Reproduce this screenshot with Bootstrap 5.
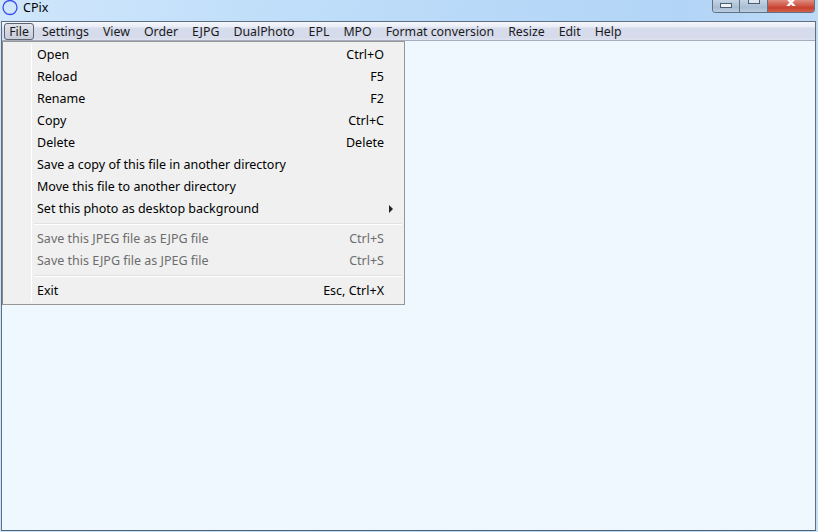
<!DOCTYPE html>
<html lang="en">
<head>
<meta charset="utf-8">
<title>CPix</title>
<link rel="stylesheet" href="https://cdn.jsdelivr.net/npm/bootstrap@5.3.0/dist/css/bootstrap.min.css">
<style>
html,body{height:100%;margin:0}
body{background:#b4d6f7;font-family:"Noto Sans","DejaVu Sans",sans-serif;font-size:12.5px;color:#000;overflow:hidden}
.win-frame{width:818px;height:532px;background:linear-gradient(100deg,#cfe6fb 0%,#bcdcf9 40%,#b2d4f6 75%,#c4dff8 100%);display:flex;flex-direction:column}
.title-row{height:21px;flex:none;padding-left:2px;line-height:16px}
.app-ring{width:16px;height:16px;flex:none}
.app-name{margin-left:5px;font-size:12.5px;line-height:15px}
.win-btns{margin-right:3px;height:13px;border:1px solid #5f7183;border-top:0;border-radius:0 0 4px 4px;overflow:hidden}
.win-btn{width:27px;height:12px;background:linear-gradient(#c5d5e6,#a9bdd3 60%,#bccde0);border-right:1px solid #5f7183;display:flex;justify-content:center}
.win-btn.wb-mid{width:28px}
.win-btn.wb-close{width:46px;border-right:0;background:linear-gradient(#e08d80,#c8412f 65%,#d4614f)}
.glyph-min{width:12px;height:5px;margin-top:3px;background:#eef3f8;border:1px solid #4b5c6e}
.glyph-max{width:12px;height:5px;margin-top:-1px;background:#dfe8f1;border:1px solid #4b5c6e;border-top:0}
.glyph-x{width:14px;height:6px;display:block}
.client-box{flex:1;margin:0 2px 1px 1px;border:1px solid #5d6f80;border-bottom-color:#4f6275;background:#f0f8ff;display:flex;flex-direction:column;position:relative;min-height:0}
.bar-row{height:19px;flex:none;background:linear-gradient(#f5f7fb 0,#e9ecf6 28%,#d7dcec 33%,#d5dbeb 85%,#dfe3ef 100%);border-bottom:1px solid #a7adbd;padding-left:2px;gap:0;font-size:12.33px}
.bar-item{padding:0 7px;line-height:19px;color:#1a1a1a;white-space:nowrap}
.bar-item.open-item{padding:0;width:30px;text-align:center;margin-right:1px;height:17px;line-height:15px;margin-top:1px;border:1px solid #5c6470;border-radius:3px;background:linear-gradient(#dfe3ec,#c7ccd9)}
.drop-panel{position:absolute;left:0;top:19px;width:403px;height:264px;background:#f0f0f0;border:1px solid #979797;padding:2px;border-left-color:#8a8a8a}
.drop-panel::before{content:"";position:absolute;left:28px;top:2px;bottom:2px;width:1px;background:#e2e3e3;border-right:1px solid #fff}
.drop-row{height:22px;line-height:21px;padding:0 18px 0 32px;white-space:nowrap;position:relative}
.drop-row.muted-row{color:#6d6d6d}
.drop-row .keys{color:inherit}
.drop-rule{height:8px;margin-left:29px;position:relative}
.drop-rule::after{content:"";position:absolute;left:0;right:0;top:3px;height:2px;background:#e2e3e3;border-bottom:1px solid #fff}
.sub-arrow{width:0;height:0;border-left:4px solid #222;border-top:4px solid transparent;border-bottom:4px solid transparent;margin-right:-9px;margin-top:7px}
</style>
</head>
<body>
<div class="win-frame">
  <div class="title-row d-flex align-items-start">
    <svg class="app-ring" viewBox="0 0 16 16" aria-hidden="true"><circle cx="8" cy="7.5" r="7" fill="none" stroke="#3c4cf0" stroke-width="1.3"/></svg>
    <span class="app-name">CPix</span>
    <div class="win-btns d-flex ms-auto">
      <div class="win-btn"><div class="glyph-min"></div></div>
      <div class="win-btn wb-mid"><div class="glyph-max"></div></div>
      <div class="win-btn wb-close"><svg class="glyph-x" viewBox="0 0 14 6" aria-hidden="true"><path d="M3 -2 L7 2.5 L11 -2 M3 7 L7 2.5 L11 7" fill="none" stroke="#fff" stroke-width="2.4"/></svg></div>
    </div>
  </div>
  <div class="client-box">
    <nav class="bar-row d-flex">
      <span class="bar-item open-item">File</span>
      <span class="bar-item">Settings</span>
      <span class="bar-item">View</span>
      <span class="bar-item">Order</span>
      <span class="bar-item">EJPG</span>
      <span class="bar-item">DualPhoto</span>
      <span class="bar-item">EPL</span>
      <span class="bar-item">MPO</span>
      <span class="bar-item">Format conversion</span>
      <span class="bar-item">Resize</span>
      <span class="bar-item">Edit</span>
      <span class="bar-item">Help</span>
    </nav>
    <div class="drop-panel">
      <div class="drop-row d-flex justify-content-between"><span>Open</span><span class="keys">Ctrl+O</span></div>
      <div class="drop-row d-flex justify-content-between"><span>Reload</span><span class="keys">F5</span></div>
      <div class="drop-row d-flex justify-content-between"><span>Rename</span><span class="keys">F2</span></div>
      <div class="drop-row d-flex justify-content-between"><span>Copy</span><span class="keys">Ctrl+C</span></div>
      <div class="drop-row d-flex justify-content-between"><span>Delete</span><span class="keys">Delete</span></div>
      <div class="drop-row"><span>Save a copy of this file in another directory</span></div>
      <div class="drop-row"><span>Move this file to another directory</span></div>
      <div class="drop-row d-flex justify-content-between align-items-start"><span>Set this photo as desktop background</span><span class="sub-arrow"></span></div>
      <div class="drop-rule"></div>
      <div class="drop-row muted-row d-flex justify-content-between"><span>Save this JPEG file as EJPG file</span><span class="keys">Ctrl+S</span></div>
      <div class="drop-row muted-row d-flex justify-content-between"><span>Save this EJPG file as JPEG file</span><span class="keys">Ctrl+S</span></div>
      <div class="drop-rule"></div>
      <div class="drop-row d-flex justify-content-between"><span>Exit</span><span class="keys">Esc, Ctrl+X</span></div>
    </div>
  </div>
</div>
<script src="https://cdn.jsdelivr.net/npm/bootstrap@5.3.0/dist/js/bootstrap.bundle.min.js"></script>
</body>
</html>
